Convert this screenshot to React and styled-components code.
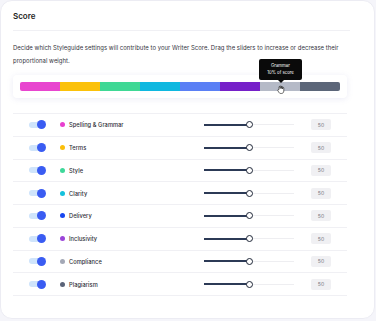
import React from 'react';
import styled, { createGlobalStyle } from 'styled-components';

const GlobalStyle = createGlobalStyle`
  html, body {
    margin: 0;
    padding: 0;
    background: #f5f5fa;
  }
  body {
    font-family: Inter, "Liberation Sans", sans-serif;
    color: #2b2b33;
  }
`;

const Card = styled.div`
  box-sizing: border-box;
  width: 375px;
  height: 319px;
  background: #ffffff;
  border-radius: 12px;
  border: 1px solid #ececf3;
  padding: 0 0 0 12px;
`;

const Header = styled.div`
  width: 337px;
  height: 29px;
  display: flex;
  align-items: center;
  border-bottom: 1px solid #f0f0f4;
`;

const Title = styled.h2`
  margin: 0;
  font-size: 8px;
  font-weight: 600;
  color: #1f1f26;
`;

const Description = styled.p`
  margin: 10px 0 0;
  width: 338px;
  font-size: 5.9px;
  letter-spacing: 0.05px;
  line-height: 13px;
  color: #33333d;
`;

const BarBox = styled.div`
  position: relative;
  box-sizing: border-box;
  width: 334px;
  margin-top: 8px;
  padding: 7px;
  background: #fff;
  border-radius: 4px;
  box-shadow: 0 1px 6px rgba(110, 110, 190, 0.14);
`;

const Bar = styled.div`
  display: flex;
  height: 9px;
  border-radius: 2px;
  overflow: hidden;
`;

const Segment = styled.div`
  flex: 1;
  background: ${(p) => p.$color};
`;

const Tooltip = styled.div`
  position: absolute;
  left: 246px;
  top: -16px;
  width: 43px;
  height: 21px;
  background: #0a0a0a;
  border-radius: 2px;
  color: #fff;
  font-size: 4.3px;
  line-height: 6.5px;
  text-align: center;
  display: flex;
  flex-direction: column;
  justify-content: center;

  &::after {
    content: '';
    position: absolute;
    left: 19px;
    bottom: -3px;
    border-left: 3px solid transparent;
    border-right: 3px solid transparent;
    border-top: 3px solid #0a0a0a;
  }
`;

const Cursor = styled.svg`
  position: absolute;
  left: 264px;
  top: 10px;
`;

const List = styled.div`
  width: 334px;
  margin-top: 15px;
  border-top: 1px solid #f0f0f4;
`;

const Row = styled.div`
  box-sizing: border-box;
  height: 22.75px;
  display: flex;
  align-items: center;
  padding: 0 16px 0 16px;
  border-bottom: 1px solid #f0f0f4;
`;

const Toggle = styled.div`
  position: relative;
  width: 17px;
  height: 9px;
  margin-right: 13.5px;

  &::before {
    content: '';
    position: absolute;
    left: 0;
    top: 1.5px;
    width: 13px;
    height: 6px;
    border-radius: 3px;
    background: #cfe4fb;
  }
`;

const Knob = styled.span`
  position: absolute;
  left: 7.5px;
  top: 0;
  width: 9px;
  height: 9px;
  border-radius: 50%;
  background: #3a5cf2;
`;

const Dot = styled.span`
  width: 5px;
  height: 5px;
  border-radius: 50%;
  background: ${(p) => p.$color};
  margin-right: 4.5px;
  flex-shrink: 0;
`;

const Label = styled.span`
  flex: 1;
  font-size: 5.7px;
  font-weight: 500;
  letter-spacing: 0.05px;
  color: #2e2e36;
`;

const Slider = styled.div`
  position: relative;
  width: 90px;
  height: 8px;
  margin-right: 17px;

  &::before {
    content: '';
    position: absolute;
    left: 0;
    right: 0;
    top: 3.5px;
    height: 1px;
    background: #eeeef1;
  }
`;

const Fill = styled.span`
  position: absolute;
  left: 0;
  top: 3px;
  height: 2px;
  background: #2c3a56;
`;

const Thumb = styled.span`
  position: absolute;
  top: 0.5px;
  box-sizing: border-box;
  width: 7px;
  height: 7px;
  margin-left: -3.5px;
  border-radius: 50%;
  background: #fff;
  border: 1.3px solid #1e2637;
`;

const Value = styled.div`
  width: 20px;
  height: 11px;
  border-radius: 2px;
  background: #f0f0f3;
  color: #7a7a82;
  font-size: 5.2px;
  display: flex;
  align-items: center;
  justify-content: center;
`;

const segments = ['#e845cf', '#fbc10a', '#3fd895', '#0fb8e0', '#5a7ff5', '#7620c9', '#b5bac7', '#5c6679'];

const categories = [
  { name: 'Spelling & Grammar', color: '#e83fcf' },
  { name: 'Terms', color: '#fbbf0a' },
  { name: 'Style', color: '#3ed89a' },
  { name: 'Clarity', color: '#14c1dc' },
  { name: 'Delivery', color: '#1746f0' },
  { name: 'Inclusivity', color: '#9b45d9' },
  { name: 'Compliance', color: '#a3a8b6' },
  { name: 'Plagiarism', color: '#5a6378' },
];

function App() {
  return (
    <>
      <GlobalStyle />
      <Card>
        <Header>
          <Title>Score</Title>
        </Header>
        <Description>
          Decide which Styleguide settings will contribute to your Writer Score. Drag the sliders to increase or decrease their proportional weight.
        </Description>
        <BarBox>
          <Bar>
            {segments.map((c) => (
              <Segment key={c} $color={c} />
            ))}
          </Bar>
          <Tooltip>
            <span>Grammar</span>
            <span>10% of score</span>
          </Tooltip>
          <Cursor width="8" height="9" viewBox="0 0 16 18">
            <path
              d="M4 8 V4 a1.2 1.2 0 0 1 2.4 0 V7 V3 a1.2 1.2 0 0 1 2.4 0 V7 V4 a1.2 1.2 0 0 1 2.4 0 V8 V6 a1.2 1.2 0 0 1 2.4 0 V12 c0 3 -2 5 -5 5 h-1 c-2 0 -3 -1 -4 -2.5 L1.5 11 a1.2 1.2 0 0 1 2 -1.3 Z"
              fill="#fff"
              stroke="#222"
              strokeWidth="1.3"
              strokeLinejoin="round"
            />
          </Cursor>
        </BarBox>
        <List>
          {categories.map((cat) => (
            <Row key={cat.name}>
              <Toggle>
                <Knob />
              </Toggle>
              <Dot $color={cat.color} />
              <Label>{cat.name}</Label>
              <Slider>
                <Fill style={{ width: '45px' }} />
                <Thumb style={{ left: '45px' }} />
              </Slider>
              <Value>50</Value>
            </Row>
          ))}
        </List>
      </Card>
    </>
  );
}

export default App;
